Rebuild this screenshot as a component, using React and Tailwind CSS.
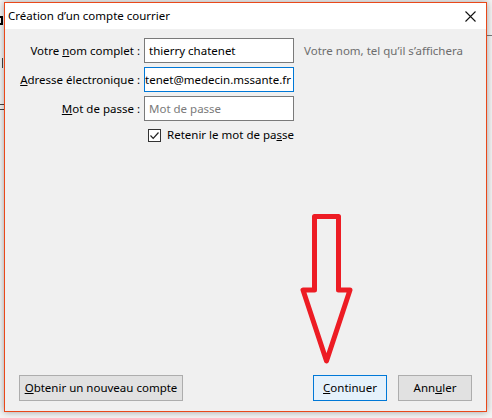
import React from 'react';

const Field = ({ label, children, hint }) => (
  <>
    <div className="flex items-center justify-end pr-[4px] whitespace-nowrap">{label}</div>
    <div className="h-[25px]">{children}</div>
    <div className="flex items-center pl-[10px] text-[#6d6d6d] whitespace-nowrap">{hint}</div>
  </>
);

const Button = ({ children, primary, className = '' }) => (
  <button
    className={`h-[26px] border ${primary ? 'border-[#0078d7] bg-[#e5f1fb]' : 'border-[#adadad] bg-[#e1e1e1]'} leading-none ${className}`}
  >
    {children}
  </button>
);

export default function App() {
  return (
    <div className="relative w-[492px] h-[418px] overflow-hidden bg-[#f4f4f4] text-[11.5px] text-black font-['Noto_Sans','Segoe_UI',sans-serif]">
      {/* bits of the app behind the dialog */}
      <div className="absolute left-0 top-[16px] w-[3px] h-[9px] border-[2px] border-l-0 border-black"></div>
      <div className="absolute left-0 top-[58px] w-[3px] h-[10px] border-r border-[#444]"></div>
      <div className="absolute left-0 top-[104px] w-[4px] h-[6px] border-y border-[#444]"></div>
      <div className="absolute left-[487px] top-[35px] w-[10px] h-px bg-[#7a7a7a]"></div>

      {/* dialog */}
      <div className="relative ml-[4px] mt-[2px] w-[483px] h-[410px] flex flex-col border border-[#e9481a] bg-[#f0f0f0] shadow-[0_0_7px_rgba(0,0,0,0.35)]">
        <div className="h-[26px] bg-white flex items-center justify-between pl-[3px] pr-[10px]">
          <span>Création d’un compte courrier</span>
          <svg width="11" height="11" viewBox="0 0 11 11">
            <path d="M0.5 0.5 L10.5 10.5 M10.5 0.5 L0.5 10.5" stroke="#111" strokeWidth="1.1" fill="none" />
          </svg>
        </div>

        <div className="flex-1 pt-[9px] pl-[4px]">
          <div className="grid grid-cols-[135px_150px_1fr] gap-y-[4px]">
            <Field label={<span>Votre <u>n</u>om complet :</span>} hint="Votre nom, tel qu’il s’affichera">
              <div className="h-full border border-[#7a7a7a] bg-white flex items-center px-[4px]">thierry chatenet</div>
            </Field>
            <Field label={<span><u>A</u>dresse électronique :</span>}>
              <div className="h-full border border-[#0078d7] bg-white flex items-center justify-end px-[2px] overflow-hidden whitespace-nowrap">
                <span>tenet@medecin.mssante.fr</span>
              </div>
            </Field>
            <Field label={<span><u>M</u>ot de passe :</span>}>
              <div className="h-full border border-[#7a7a7a] bg-white flex items-center px-[4px] text-[#7a7a7a]">Mot de passe</div>
            </Field>
            <div></div>
            <div className="col-span-2 flex items-center gap-[6px] pl-[4px] h-[20px]">
              <div className="w-[13px] h-[13px] border border-[#333] bg-white flex items-center justify-center">
                <svg width="11" height="11" viewBox="0 0 11 11">
                  <path d="M1.5 5.5 L4.2 8.3 L9.5 2.5" stroke="#222" strokeWidth="1.2" fill="none" />
                </svg>
              </div>
              <span>Retenir le mot de pa<u>s</u>se</span>
            </div>
          </div>
        </div>

        <div className="flex items-center px-[14px] pb-[10px]">
          <Button className="w-[164px]"><u>O</u>btenir un nouveau compte</Button>
          <div className="flex-1"></div>
          <Button primary className="w-[74px]"><u>C</u>ontinuer</Button>
          <Button className="w-[74px] ml-[11px]">Ann<u>u</u>ler</Button>
        </div>
      </div>

      {/* red annotation arrow */}
      <svg className="absolute left-0 top-0 pointer-events-none" width="492" height="418">
        <polygon
          points="314.5,216.5 338.5,216.5 338.5,290 350,290 326.5,361 303,290 314.5,290"
          fill="none"
          stroke="#ed1c24"
          strokeWidth="5"
          strokeLinejoin="round"
        />
      </svg>
    </div>
  );
}
